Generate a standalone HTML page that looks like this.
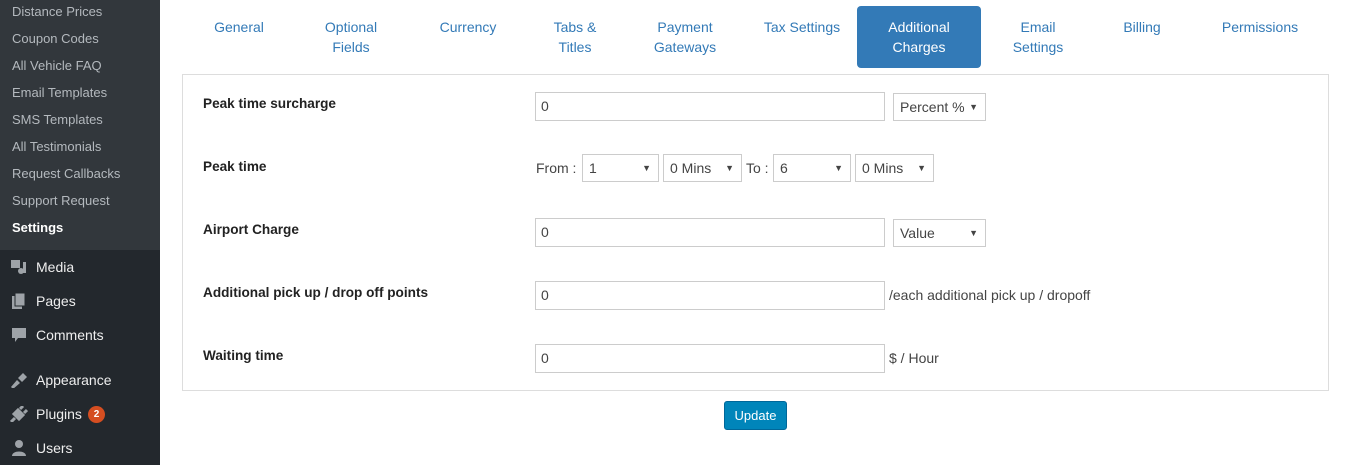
<!DOCTYPE html>
<html><head><style>
*{margin:0;padding:0;box-sizing:border-box}
body{width:1347px;height:465px;background:#fff;font-family:"Liberation Sans",Arial,sans-serif;font-size:14px;color:#333;position:relative;overflow:hidden}
.side{position:absolute;left:0;top:0;width:160px;height:465px;background:#23282d}
.sub{position:absolute;left:0;top:0;width:160px;height:250px;background:#32373c}
.sub div{position:absolute;left:12px;font-size:13px;color:#b4b9be}
.m{position:absolute;left:36px;font-size:14px;color:#eee}
.ic{position:absolute;left:10px;width:18px;height:16px}
.tab{position:absolute;top:17px;color:#337ab7;text-align:center;line-height:20px;transform:translateX(-50%);white-space:nowrap}
.act{position:absolute;left:857px;top:6px;width:124px;height:62px;background:#337ab7;border-radius:4px;color:#fff;text-align:center;line-height:20px;padding-top:11px}
.panel{position:absolute;left:182px;top:74px;width:1147px;height:317px;border:1px solid #ddd}
.lbl{position:absolute;left:203px;font-weight:bold;font-size:13.6px;color:#222}
.in{position:absolute;left:535px;width:350px;height:29px;border:1px solid #ccc;padding:0 0 0 5px;line-height:27px;font-size:14px;color:#444}
.sel{position:absolute;height:28px;border:1px solid #ccc;line-height:26px;padding-left:6px;font-size:14px;color:#444}
.sel:after{content:"▼";position:absolute;right:7px;top:0;font-size:9px}
.t{position:absolute;font-size:14px;color:#444}
</style></head><body>
<div class="side"><div class="sub">
<div style="top:4px">Distance Prices</div>
<div style="top:31px">Coupon Codes</div>
<div style="top:58px">All Vehicle FAQ</div>
<div style="top:85px">Email Templates</div>
<div style="top:112px">SMS Templates</div>
<div style="top:139px">All Testimonials</div>
<div style="top:166px">Request Callbacks</div>
<div style="top:193px">Support Request</div>
<div style="top:220px;color:#fff;font-weight:bold">Settings</div>
</div>
<svg class="ic" style="top:259px" viewBox="0 0 18 16"><rect x="1" y="1" width="9" height="8" fill="#9ea3a8"/><circle cx="11" cy="12" r="3" fill="#9ea3a8"/><rect x="13" y="3" width="3" height="11" fill="#9ea3a8"/></svg>
<div class="m" style="top:259px">Media</div>
<svg class="ic" style="top:293px" viewBox="0 0 18 16"><rect x="2" y="3" width="10" height="13" fill="#9ea3a8"/><rect x="5" y="0" width="10" height="13" fill="#9ea3a8" stroke="#23282d"/></svg>
<div class="m" style="top:293px">Pages</div>
<svg class="ic" style="top:327px" viewBox="0 0 18 16"><path d="M2 1h14v10h-8l-3 4v-4h-3z" fill="#9ea3a8"/></svg>
<div class="m" style="top:327px">Comments</div>
<svg class="ic" style="top:372px" viewBox="0 0 18 16"><path d="M1 15l6-7 3 3-7 6zM8 6l5-5 4 4-5 5z" fill="#9ea3a8"/></svg>
<div class="m" style="top:372px">Appearance</div>
<svg class="ic" style="top:406px" viewBox="0 0 18 16"><path d="M1 16l4-4M4 8l5 5 4-4-5-5zM10 3l3-3M14 7l3-3" stroke="#9ea3a8" stroke-width="3" fill="#9ea3a8"/></svg>
<div class="m" style="top:406px">Plugins</div>
<div style="position:absolute;left:88px;top:406px;width:17px;height:17px;border-radius:50%;background:#d54e21;color:#fff;font-size:10px;font-weight:bold;text-align:center;line-height:17px">2</div>
<svg class="ic" style="top:440px" viewBox="0 0 18 16"><circle cx="9" cy="4" r="4" fill="#9ea3a8"/><path d="M2 16c0-6 14-6 14 0z" fill="#9ea3a8"/></svg>
<div class="m" style="top:440px">Users</div>
</div>
<div class="tab" style="left:239px">General</div>
<div class="tab" style="left:351px">Optional<br>Fields</div>
<div class="tab" style="left:468px">Currency</div>
<div class="tab" style="left:575px">Tabs &amp;<br>Titles</div>
<div class="tab" style="left:685px">Payment<br>Gateways</div>
<div class="tab" style="left:802px">Tax Settings</div>
<div class="act">Additional<br>Charges</div>
<div class="tab" style="left:1038px">Email<br>Settings</div>
<div class="tab" style="left:1142px">Billing</div>
<div class="tab" style="left:1260px">Permissions</div>
<div class="panel"></div>
<div class="lbl" style="top:96px">Peak time surcharge</div>
<div class="in" style="top:92px">0</div>
<div class="sel" style="left:893px;top:93px;width:93px">Percent %</div>
<div class="lbl" style="top:159px">Peak time</div>
<div class="t" style="left:536px;top:160px">From :</div>
<div class="sel" style="left:582px;top:154px;width:77px">1</div>
<div class="sel" style="left:663px;top:154px;width:79px">0 Mins</div>
<div class="t" style="left:746px;top:160px">To :</div>
<div class="sel" style="left:773px;top:154px;width:78px">6</div>
<div class="sel" style="left:855px;top:154px;width:79px">0 Mins</div>
<div class="lbl" style="top:222px">Airport Charge</div>
<div class="in" style="top:218px">0</div>
<div class="sel" style="left:893px;top:219px;width:93px">Value</div>
<div class="lbl" style="top:285px">Additional pick up / drop off points</div>
<div class="in" style="top:281px">0</div>
<div class="t" style="left:889px;top:287px">/each additional pick up / dropoff</div>
<div class="lbl" style="top:348px">Waiting time</div>
<div class="in" style="top:344px">0</div>
<div class="t" style="left:889px;top:350px">$ / Hour</div>
<div style="position:absolute;left:724px;top:401px;width:63px;height:29px;background:#0085ba;border:1px solid #006799;border-radius:3px;color:#fff;font-size:13px;text-align:center;line-height:27px">Update</div>
</body></html>
